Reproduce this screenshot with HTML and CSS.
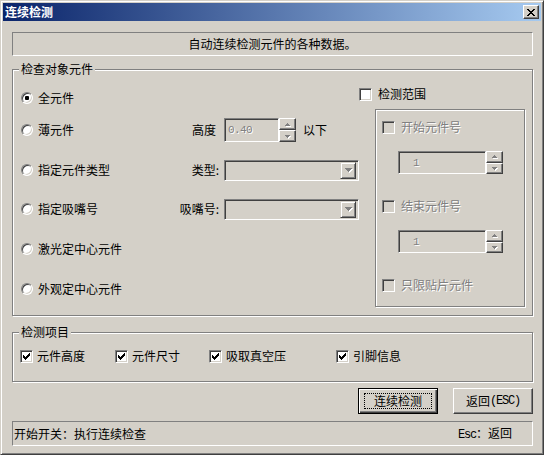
FILE: index.html
```html
<!DOCTYPE html>
<html lang="zh-CN">
<head>
<meta charset="utf-8">
<title>连续检测</title>
<link rel="stylesheet" href="styles.css">
</head>
<body>
<div class="window">
  <div class="titlebar">
    <span class="title">连续检测</span>
    <div class="close">
      <svg width="8" height="7" viewBox="0 0 8 7"><path d="M0 0h2v1h-2zM6 0h2v1h-2zM1 1h2v1h-2zM5 1h2v1h-2zM2 2h4v1h-4zM3 3h2v1h-2zM2 4h4v1h-4zM1 5h2v1h-2zM5 5h2v1h-2zM0 6h2v1h-2zM6 6h2v1h-2z" fill="#000"/></svg>
    </div>
  </div>
  <div class="client">
    <div class="info">自动连续检测元件的各种数据。</div>

    <div class="group g-target">
      <span class="legend">检查对象元件</span>
      <div class="options">
        <div class="opt r1">
          <div class="choice"><span class="rb on"><span class="dot"></span></span><span>全元件</span></div>
        </div>
        <div class="opt r2">
          <div class="choice"><span class="rb"></span><span>薄元件</span></div>
          <span class="flabel fl-h">高度</span>
          <div class="edit e-h"><span class="mono dis">0.40</span></div>
          <div class="spin">
            <div class="sbtn"><svg width="5" height="3" viewBox="0 0 5 3"><path d="M2 0h1v1h1v1h1v1h-5v-1h1v-1h1z" fill="#808080"/></svg></div>
            <div class="sbtn"><svg width="5" height="3" viewBox="0 0 5 3"><path d="M0 0h5v1h-1v1h-1v1h-1v-1h-1v-1h-1z" fill="#808080"/></svg></div>
          </div>
          <span class="after">以下</span>
        </div>
        <div class="opt r3">
          <div class="choice"><span class="rb"></span><span>指定元件类型</span></div>
          <span class="flabel">类型:</span>
          <div class="edit combo">
            <div class="dd"><svg width="7" height="4" viewBox="0 0 7 4"><path d="M0 0h7v1h-1v1h-1v1h-1v1h-1v-1h-1v-1h-1v-1h-1z" fill="#808080"/></svg></div>
          </div>
        </div>
        <div class="opt r4">
          <div class="choice"><span class="rb"></span><span>指定吸嘴号</span></div>
          <span class="flabel">吸嘴号:</span>
          <div class="edit combo">
            <div class="dd"><svg width="7" height="4" viewBox="0 0 7 4"><path d="M0 0h7v1h-1v1h-1v1h-1v1h-1v-1h-1v-1h-1v-1h-1z" fill="#808080"/></svg></div>
          </div>
        </div>
        <div class="opt r5">
          <div class="choice"><span class="rb"></span><span>激光定中心元件</span></div>
        </div>
        <div class="opt r6">
          <div class="choice"><span class="rb"></span><span>外观定中心元件</span></div>
        </div>
      </div>

      <div class="range">
        <div class="crow"><span class="cb"></span><span>检测范围</span></div>
        <div class="group inner">
          <div class="crow"><span class="cb off"></span><span class="dis">开始元件号</span></div>
          <div class="spinbox">
            <div class="edit e-n"><span class="mono dis">1</span></div>
            <div class="spin">
              <div class="sbtn"><svg width="5" height="3" viewBox="0 0 5 3"><path d="M2 0h1v1h1v1h1v1h-5v-1h1v-1h1z" fill="#808080"/></svg></div>
              <div class="sbtn"><svg width="5" height="3" viewBox="0 0 5 3"><path d="M0 0h5v1h-1v1h-1v1h-1v-1h-1v-1h-1z" fill="#808080"/></svg></div>
            </div>
          </div>
          <div class="crow gap24"><span class="cb off"></span><span class="dis">结束元件号</span></div>
          <div class="spinbox">
            <div class="edit e-n"><span class="mono dis">1</span></div>
            <div class="spin">
              <div class="sbtn"><svg width="5" height="3" viewBox="0 0 5 3"><path d="M2 0h1v1h1v1h1v1h-5v-1h1v-1h1z" fill="#808080"/></svg></div>
              <div class="sbtn"><svg width="5" height="3" viewBox="0 0 5 3"><path d="M0 0h5v1h-1v1h-1v1h-1v-1h-1v-1h-1z" fill="#808080"/></svg></div>
            </div>
          </div>
          <div class="crow gap24"><span class="cb off"></span><span class="dis">只限贴片元件</span></div>
        </div>
      </div>
    </div>

    <div class="group g-items">
      <span class="legend">检测项目</span>
      <div class="items">
        <div class="crow tight"><span class="cb"><svg width="7" height="7" viewBox="0 0 7 7"><path d="M6 0H7V3H6V4H5V5H4V6H3V7H2V6H1V5H0V2H1V3H2V4H3V3H4V2H5V1H6Z" fill="#000"/></svg></span><span>元件高度</span></div>
        <div class="crow tight"><span class="cb"><svg width="7" height="7" viewBox="0 0 7 7"><path d="M6 0H7V3H6V4H5V5H4V6H3V7H2V6H1V5H0V2H1V3H2V4H3V3H4V2H5V1H6Z" fill="#000"/></svg></span><span>元件尺寸</span></div>
        <div class="crow tight"><span class="cb"><svg width="7" height="7" viewBox="0 0 7 7"><path d="M6 0H7V3H6V4H5V5H4V6H3V7H2V6H1V5H0V2H1V3H2V4H3V3H4V2H5V1H6Z" fill="#000"/></svg></span><span>吸取真空压</span></div>
        <div class="crow tight"><span class="cb"><svg width="7" height="7" viewBox="0 0 7 7"><path d="M6 0H7V3H6V4H5V5H4V6H3V7H2V6H1V5H0V2H1V3H2V4H3V3H4V2H5V1H6Z" fill="#000"/></svg></span><span>引脚信息</span></div>
      </div>
    </div>

    <div class="buttons">
      <div class="btn default"><span class="focus">连续检测</span></div>
      <div class="btn">返回<span class="mono big">(ESC)</span></div>
    </div>

    <div class="status">
      <span>开始开关：执行连续检查</span>
      <span><span class="mono big">Esc</span>：返回</span>
    </div>
  </div>
</div>
</body>
</html>
```

FILE: styles.css
```css
* { box-sizing: border-box; }

body {
  margin: 0;
  background: #D4D0C8;
  font-family: "Noto Sans CJK SC", "Liberation Sans", sans-serif;
  font-size: 12px;
  line-height: 14px;
  color: #000;
}

.mono {
  font-family: "Liberation Mono", "Noto Sans CJK SC", monospace;
  font-size: 11px;
  letter-spacing: -0.6px;
}

.mono.big {
  font-size: 12px;
  letter-spacing: -1.2px;
}

.dis {
  color: #808080;
  text-shadow: 1px 1px 0 #fff;
}

.window {
  width: 544px;
  height: 455px;
  background: #D4D0C8;
  border: 1px solid;
  border-color: #D4D0C8 #404040 #404040 #D4D0C8;
  box-shadow: inset 1px 1px #fff, inset -1px -1px #808080;
  padding: 2px;
  display: flex;
  flex-direction: column;
}

.titlebar {
  height: 18px;
  flex: none;
  background: linear-gradient(to right, #0A246A, #A6CAF0);
  display: flex;
  align-items: center;
  justify-content: space-between;
  padding: 0 2px 0 2px;
}

.title {
  color: #fff;
  font-weight: bold;
  line-height: 14px;
}

.close {
  width: 16px;
  height: 14px;
  background: #D4D0C8;
  border: 1px solid;
  border-color: #fff #404040 #404040 #fff;
  box-shadow: inset -1px -1px #808080;
  display: flex;
  align-items: center;
  justify-content: center;
  padding-right: 1px;
}

.client {
  padding: 0 8px 0 9px;
  display: flex;
  flex-direction: column;
}

.info {
  margin-top: 11px;
  height: 24px;
  border: 1px solid;
  border-color: #808080 #fff #fff #808080;
  text-align: center;
  line-height: 22px;
}

.group {
  position: relative;
  border: 1px solid #808080;
  box-shadow: inset 1px 1px #fff, 1px 1px #fff;
}

.legend {
  position: absolute;
  top: -8px;
  left: 6px;
  padding: 0 2px;
  background: #D4D0C8;
  line-height: 14px;
}

.g-target {
  margin-top: 13px;
  height: 247px;
  display: flex;
  padding: 16px 6px 0 8px;
}

.options {
  width: 338px;
  display: flex;
  flex-direction: column;
}

.opt {
  height: 24px;
  display: flex;
  align-items: center;
}

.r2 { margin-top: 8px; }
.r3 { margin-top: 16px; }
.r4 { margin-top: 15px; }
.r5 { margin-top: 16px; }
.r6 { margin-top: 16px; }

.choice {
  width: 140px;
  display: flex;
  align-items: center;
  gap: 5px;
}

.rb {
  width: 12px;
  height: 12px;
  flex: none;
  border-radius: 50%;
  border: 1px solid;
  border-color: #808080 #fff #fff #808080;
  box-shadow: inset 1px 1px #404040, inset -1px -1px #D4D0C8;
  background: #fff;
  display: flex;
  align-items: center;
  justify-content: center;
}

.dot {
  width: 4px;
  height: 4px;
  border-radius: 1px;
  background: #000;
}

.flabel {
  width: 58px;
  text-align: right;
  margin-right: 5px;
}

.fl-h { padding-right: 3px; }

.edit {
  border: 1px solid;
  border-color: #808080 #fff #fff #808080;
  box-shadow: inset 1px 1px #404040, inset -1px -1px #D4D0C8;
  background: #D4D0C8;
  display: flex;
  align-items: center;
}

.e-h {
  width: 55px;
  height: 24px;
  padding-left: 3px;
}

.spin {
  width: 17px;
  height: 24px;
  display: flex;
  flex-direction: column;
}

.sbtn {
  flex: 1;
  background: #D4D0C8;
  border: 1px solid;
  border-color: #fff #404040 #404040 #fff;
  box-shadow: inset -1px -1px #808080;
  display: flex;
  align-items: center;
  justify-content: center;
}

.sbtn svg { filter: drop-shadow(1px 1px 0 #fff); }

.after { margin-left: 7px; }

.combo {
  width: 135px;
  height: 21px;
  justify-content: flex-end;
  padding: 2px;
}

.dd {
  width: 16px;
  height: 17px;
  background: #D4D0C8;
  border: 1px solid;
  border-color: #D4D0C8 #404040 #404040 #D4D0C8;
  box-shadow: inset 1px 1px #fff, inset -1px -1px #808080;
  display: flex;
  align-items: center;
  justify-content: center;
}

.dd svg { filter: drop-shadow(1px 1px 0 #fff); }

.range {
  width: 167px;
  display: flex;
  flex-direction: column;
}

.crow {
  height: 16px;
  display: flex;
  align-items: center;
  gap: 6px;
}

.crow.tight { gap: 4px; }

.cb {
  width: 13px;
  height: 13px;
  flex: none;
  border: 1px solid;
  border-color: #808080 #fff #fff #808080;
  box-shadow: inset 1px 1px #404040, inset -1px -1px #D4D0C8;
  background: #fff;
  display: flex;
  align-items: center;
  justify-content: center;
}

.cb.off { background: #D4D0C8; }

.inner {
  margin: 7px 0 0 16px;
  width: 150px;
  height: 198px;
  padding: 9px 0 0 6px;
  display: flex;
  flex-direction: column;
}

.spinbox {
  display: flex;
  margin: 16px 0 0 16px;
  height: 23px;
}

.spinbox .spin { height: 23px; }

.e-n {
  width: 88px;
  height: 23px;
  padding-left: 14px;
}

.gap24 { margin-top: 24px; }

.g-items {
  margin-top: 16px;
  height: 50px;
  padding: 15px 0 0 7px;
}

.items {
  display: grid;
  grid-template-columns: 95px 94px 127px auto;
}

.buttons {
  margin-top: 6px;
  display: flex;
  justify-content: flex-end;
  gap: 15px;
}

.btn {
  width: 80px;
  height: 26px;
  background: #D4D0C8;
  border: 1px solid;
  border-color: #fff #404040 #404040 #fff;
  box-shadow: inset -1px -1px #808080;
  display: flex;
  align-items: center;
  justify-content: center;
}

.btn.default {
  border-color: #000;
  box-shadow: inset 1px 1px #fff, inset -1px -1px #404040, inset -2px -2px #808080;
}

.focus {
  width: 68px;
  height: 16px;
  border: 1px dotted #000;
  display: flex;
  align-items: center;
  justify-content: center;
}

.status {
  margin-top: 7px;
  height: 25px;
  border: 1px solid;
  border-color: #808080 #fff #fff #808080;
  display: flex;
  align-items: center;
  justify-content: space-between;
  padding: 0 20px 0 1px;
}
```
